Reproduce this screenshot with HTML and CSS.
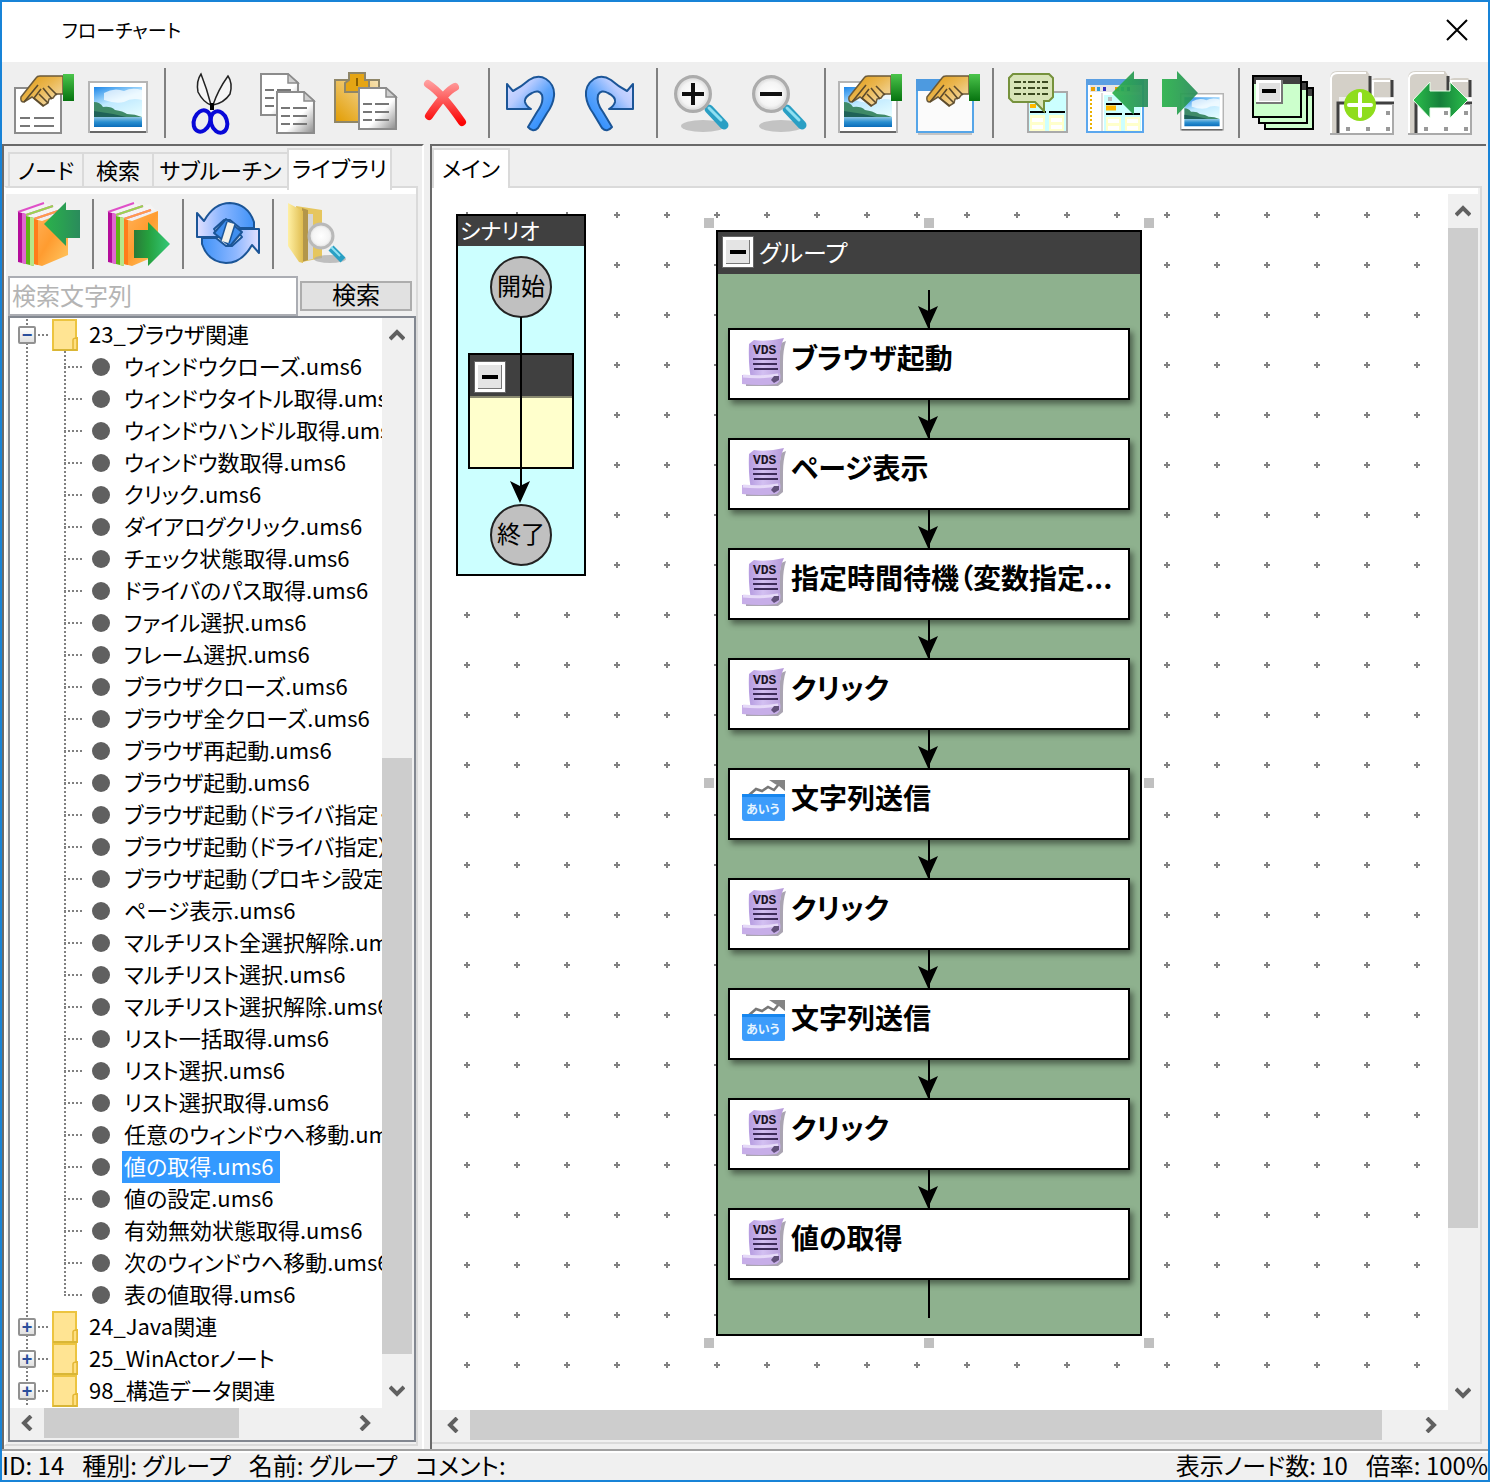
FILE: index.html
```html
<!DOCTYPE html>
<html lang="ja">
<head>
<meta charset="utf-8">
<meta name="viewport" content="width=device-width, initial-scale=1">
<title>フローチャート</title>
<link rel="stylesheet" href="styles.css">
</head>
<body>
<svg class="defs" width="0" height="0" aria-hidden="true">
  <defs>
    <linearGradient id="g-hand" x1="0" y1="0" x2="1" y2="1"><stop offset="0" stop-color="#e09a10"/><stop offset=".45" stop-color="#eab64e"/><stop offset="1" stop-color="#f6e6c4"/></linearGradient>
    <linearGradient id="g-cuff" x1="0" y1="0" x2="0" y2="1"><stop offset="0" stop-color="#4cc54c"/><stop offset="1" stop-color="#06730f"/></linearGradient>
    <linearGradient id="g-sky" x1="0" y1="0" x2=".4" y2="1"><stop offset="0" stop-color="#1c86e8"/><stop offset=".45" stop-color="#bfe9ff"/><stop offset="1" stop-color="#eaffff"/></linearGradient>
    <linearGradient id="g-sea" x1="0" y1="0" x2="0" y2="1"><stop offset="0" stop-color="#8fc6e4"/><stop offset=".5" stop-color="#2a8fd0"/><stop offset="1" stop-color="#0b6dba"/></linearGradient>
    <linearGradient id="g-page" x1="0" y1="0" x2="1" y2="1"><stop offset=".6" stop-color="#fff"/><stop offset="1" stop-color="#8a8a8a"/></linearGradient>
    <linearGradient id="g-clip" x1="1" y1="0" x2="0" y2="1"><stop offset="0" stop-color="#f7e3b4"/><stop offset="1" stop-color="#e29c00"/></linearGradient>
    <linearGradient id="g-red" gradientUnits="userSpaceOnUse" x1="0" y1="10" x2="0" y2="52"><stop offset="0" stop-color="#ffa0a0"/><stop offset="1" stop-color="#fb0505"/></linearGradient>
    <linearGradient id="g-blue" x1="0" y1="0" x2="1" y2="1"><stop offset="0" stop-color="#e2e0ff"/><stop offset=".3" stop-color="#b9ccff"/><stop offset=".55" stop-color="#5fa5fb"/><stop offset="1" stop-color="#1583ff"/></linearGradient>
    <linearGradient id="g-cycle" x1="0" y1="0" x2="1" y2="0"><stop offset="0" stop-color="#e2e0ff"/><stop offset=".4" stop-color="#8fb8ff"/><stop offset="1" stop-color="#3f92f8"/></linearGradient>
    <linearGradient id="g-green" x1="0" y1="0" x2="1" y2="0"><stop offset="0" stop-color="#2bb24c"/><stop offset=".5" stop-color="#2aa052"/><stop offset="1" stop-color="#2a8b5c"/></linearGradient>
    <linearGradient id="g-green2" x1="0" y1="0" x2="1" y2="0"><stop offset="0" stop-color="#2a7a38"/><stop offset=".4" stop-color="#25a03e"/><stop offset="1" stop-color="#34c878"/></linearGradient>
    <linearGradient id="g-orange" x1="0" y1="0" x2="1" y2="1"><stop offset="0" stop-color="#ffb35c"/><stop offset=".5" stop-color="#ff9c30"/><stop offset="1" stop-color="#ffc964"/></linearGradient>
    <linearGradient id="g-fold" x1="0" y1="0" x2="1" y2="0"><stop offset="0" stop-color="#fff0a4"/><stop offset="1" stop-color="#e0bd50"/></linearGradient>
    <radialGradient id="g-lens"><stop offset="0" stop-color="#fff"/><stop offset=".7" stop-color="#f4f4f4"/><stop offset="1" stop-color="#d8d8d8"/></radialGradient>
    <linearGradient id="g-both" x1="0" y1="0" x2="1" y2="0"><stop offset="0" stop-color="#2bc04c"/><stop offset=".5" stop-color="#15803a"/><stop offset="1" stop-color="#2bc04c"/></linearGradient>
    <linearGradient id="g-scroll" x1="0" y1="0" x2="1" y2="0"><stop offset="0" stop-color="#b59be0"/><stop offset=".4" stop-color="#d3c0f2"/><stop offset="1" stop-color="#b69ad9"/></linearGradient>

    <symbol id="hand" viewBox="0 0 64 40">
      <path d="M9 26 24 7Q25 5 28 5H51V23H44L41 27 37 28 36 32 31 35 20 26 12 31Q8 31 9 26Z" fill="url(#g-hand)" stroke="#6b5a3a" stroke-width="1.5"/>
      <path d="M26 14 12 31M29 18 22 27 32 35M31 17l9 11M36 15l9 9M27 23l9 9" fill="none" stroke="#5b4a2c" stroke-width="1.6"/>
      <path d="M51 3H62V30H51Z" fill="url(#g-cuff)"/>
    </symbol>
    <symbol id="photo" viewBox="0 0 60 54" preserveAspectRatio="none">
      <path d="M1 1H59V51H1Z" fill="#fff" stroke="#b5b5b5" stroke-width="2"/>
      <path d="M2 51H58" stroke="#686868" stroke-width="2"/>
      <path d="M6 6H54V46H6Z" fill="url(#g-sky)"/>
      <path d="M16 12q10-6 20-2 8-4 18-1v10q-10-3-18 2-8 2-20-2z" fill="#fff" opacity=".7"/>
      <path d="M6 36H54V46H6Z" fill="url(#g-sea)"/>
      <path d="M6 21q6 0 9 5 8-1 12 3 8 1 12 4 8 0 15 3H6Z" fill="#3f8a68"/>
      <path d="M6 30q16 2 32 6H6Z" fill="#1f6258"/>
    </symbol>
    <symbol id="page" viewBox="0 0 40 44">
      <path d="M1 1H28L38 10V42H1Z" fill="url(#g-page)" stroke="#8c8c8c" stroke-width="2"/>
      <path d="M28 1V10H38Z" fill="#d0d0d0" stroke="#8c8c8c" stroke-width="1.5"/>
      <path d="M5 17h9M17 17h14M5 25h9M17 25h14M5 33h9M17 33h14" stroke="#777" stroke-width="2"/>
    </symbol>
    <symbol id="lens" viewBox="0 0 64 64">
      <ellipse cx="31" cy="55" rx="22" ry="6" fill="#b8b8b8" opacity=".8"/>
      <path d="M37 38 52 54" stroke="#2a9fc4" stroke-width="9" stroke-linecap="round"/>
      <path d="M37 37 49 49" stroke="#8fe0f2" stroke-width="3" stroke-linecap="round"/>
      <circle cx="21" cy="23" r="17" fill="url(#g-lens)" stroke="#acacac" stroke-width="4"/>
      <circle cx="21" cy="23" r="15" fill="none" stroke="#e4e4e4" stroke-width="1.5"/>
    </symbol>
    <symbol id="undo" viewBox="0 0 54 64">
      <path d="M3 13 9 20Q17 16 25 9 34 3 42 8 51 14 50 25 49 34 43 42L34 57Q29 62 24 56L33 41Q40 32 38 24 35 18 28 22 20 26 21 31 22 35 27 38L3 38Z" fill="url(#g-blue)" stroke="#1b5597" stroke-width="2" stroke-linejoin="round"/>
    </symbol>
    <symbol id="books" viewBox="0 0 64 64">
      <path d="M2 10 28 0 36 4 44 2 50 8 20 18Z" fill="#f4f4f4"/>
      <path d="M2 10 28 1M10 13 37 4M18 17 45 8" stroke-width="2" stroke="#df4fc8"/>
      <path d="M10 13 37 4" stroke-width="2" stroke="#9ad650"/>
      <path d="M18 17 45 8" stroke-width="2" stroke="#ff9d4a"/>
      <path d="M2 10 10 12V62L2 60Z" fill="#b30c9a"/><path d="M6 11 10 12V62L6 61Z" fill="#df68cf"/>
      <path d="M10 14 18 16V64L10 62Z" fill="#60b514"/><path d="M14 15 18 16V64L14 63Z" fill="#b7e68a"/>
      <path d="M18 17 26 19 52 9V53L26 64 18 62Z" fill="url(#g-orange)"/>
      <path d="M18 17 22 18V63L18 62Z" fill="#ff7d1a"/>
    </symbol>
    <symbol id="cycle-half" viewBox="0 0 64 64">
      <path d="M1 11 8 19Q18 1 34 1 52 2 58 20V26H44L34 18H28L18 27 24 35H1Z" fill="url(#g-cycle)" stroke="#1b5597" stroke-width="2" stroke-linejoin="round"/>
    </symbol>
    <symbol id="tab-sheet" viewBox="0 0 66 66">
      <path d="M0 64V6Q1 0 7 0H37L41 6V26H9V64Z" fill="#d4d0c8"/>
      <path d="M1 64V7Q2 2 8 2H36" fill="none" stroke="#fff" stroke-width="2"/>
      <path d="M42 9Q43 7 46 7H60L63 10V26H42Z" fill="#d4d0c8"/>
      <path d="M43 26V10H60" fill="none" stroke="#fff" stroke-width="2"/>
      <path d="M40 5V26M62 9V26" stroke="#404040" stroke-width="3"/>
      <path d="M40 29H64" stroke="#fff" stroke-width="4"/>
      <path d="M8 31H64V64H8Z" fill="#fff"/>
      <path d="M8 64V32H64" fill="none" stroke="#404040" stroke-width="3"/>
      <path d="M63 33V63H0" fill="none" stroke="#aaa" stroke-width="2"/>
      <path d="M16 58h4M36 58h4M56 58h4M56 42h4M36 42h4" stroke="#999" stroke-width="4"/>
    </symbol>
    <symbol id="script" viewBox="0 0 44 50">
      <path d="M39 5 44 3Q41 12 41 24V44L36 48H4V45H34Z" fill="#8d8698" opacity=".75"/>
      <path d="M12 2Q25 4 42 0 37 10 38 22V42L34 46H10Q6 30 7 6Z" fill="url(#g-scroll)"/>
      <path d="M0 37Q18 39 38 35 40 43 34 46 18 48 0 46Z" fill="#c7aee8"/>
      <path d="M1 38Q18 40 36 37" fill="none" stroke="#e6daf8" stroke-width="3"/>
      <path d="M29 42l3-4h5v4l-5 3z" fill="#62507a"/>
      <path d="M11 21H35M11 26H35M12 31H36" stroke="#3d2b58" stroke-width="2"/>
      <text x="11" y="16" font-size="13" font-weight="700" font-family="Liberation Mono, monospace" fill="#1c1426">VDS</text>
    </symbol>
    <symbol id="send" viewBox="0 0 44 50">
      <path d="M6 18 14 11 20 13 26 9 32 12 37 6" fill="none" stroke="#777" stroke-width="2.5"/>
      <path d="M27 2H43V13L37 8 33 6Z" fill="#848484"/>
      <path d="M0 17H43V41Q43 43 40 43H3Q0 43 0 40Z" fill="#3c9cfb"/>
      <path d="M0 16H43V19H0Z" fill="#1786ee"/>
      <text x="4" y="36" font-size="12" font-weight="700" font-family="Noto Sans CJK JP, sans-serif" fill="#e6f4ff">あいう</text>
    </symbol>
    <symbol id="folder" viewBox="0 0 26 32">
      <path d="M1 1H24V19H25V31H1Z" fill="#ffe493" stroke="#ecc440" stroke-width="2"/>
      <path d="M21 31V21Q21 19 25 19V31Z" fill="#ffe082" stroke="#e3b735" stroke-width="1.5"/>
      <path d="M1 31H25" stroke="#d9b636" stroke-width="2"/>
    </symbol>
    <symbol id="down" viewBox="0 0 20 22"><path d="M0 0 10 5 20 0 10 22Z" fill="#000"/></symbol>
    <pattern id="plus-grid" width="50" height="50" patternUnits="userSpaceOnUse">
      <path d="M34 24h2v2h2v2h-2v2h-2v-2h-2v-2h2z" fill="#808080"/>
    </pattern>
  </defs>
</svg>

<div class="window">
  <header class="titlebar">
    <h1 class="title">フローチャート</h1>
    <button class="close" type="button" aria-label="閉じる"><svg width="22" height="22" viewBox="0 0 22 22"><path d="M1 1 21 21M21 1 1 21" stroke="#000" stroke-width="2"/></svg></button>
  </header>

  <nav class="toolbar" aria-label="ツールバー">
    <button class="tool" type="button" aria-label="プロパティ"><svg viewBox="0 0 64 64"><path d="M3 17H49V62H3Z" fill="#fff" stroke="#8c8c8c" stroke-width="2"/><path d="M8 47h10M22 47h20M8 55h10M22 55h20" stroke="#777" stroke-width="2"/><use href="#hand" width="64" height="40"/></svg></button>
    <button class="tool" type="button" aria-label="画像"><svg viewBox="0 0 64 64"><use href="#photo" x="-2" y="10" width="60" height="54"/></svg></button>
    <span class="sep"></span>
    <button class="tool" type="button" aria-label="切り取り"><svg viewBox="0 0 64 64"><path d="M21 3Q16 10 18 21 23 31 31 34 27 18 21 3Z" fill="#f6f6f6" stroke="#222" stroke-width="1.5"/><path d="M48 5Q53 12 50 23 44 32 33 34 38 19 48 5Z" fill="#f6f6f6" stroke="#222" stroke-width="1.5"/><path d="M30 32h4v7h-4z"/><ellipse cx="22" cy="50" rx="8" ry="11" transform="rotate(22 22 50)" fill="none" stroke="#0808d8" stroke-width="4"/><ellipse cx="39" cy="51" rx="8" ry="11" transform="rotate(-18 39 51)" fill="none" stroke="#0808d8" stroke-width="4"/></svg></button>
    <button class="tool" type="button" aria-label="コピー"><svg viewBox="0 0 64 64"><use href="#page" x="2" y="2" width="40" height="44"/><use href="#page" x="18" y="20" width="40" height="44"/></svg></button>
    <button class="tool" type="button" aria-label="貼り付け"><svg viewBox="0 0 64 64"><path d="M-1 9H43V51H-1Z" fill="url(#g-clip)" stroke="#8f8668" stroke-width="2"/><path d="M13 2H29V9H33V21H9V12L13 9Z" fill="#e5a514" stroke="#8f8668" stroke-width="2"/><path d="M21 7v8" stroke="#8a5f00" stroke-width="2"/><use href="#page" x="22" y="16" width="40" height="44"/></svg></button>
    <button class="tool" type="button" aria-label="削除"><svg viewBox="0 0 64 64"><path d="M14 13Q28 22 48 51M41 16Q32 20 15 45" fill="none" stroke="url(#g-red)" stroke-width="8" stroke-linecap="round"/></svg></button>
    <span class="sep"></span>
    <button class="tool" type="button" aria-label="元に戻す"><svg viewBox="0 0 64 64"><use href="#undo" width="54" height="64"/></svg></button>
    <button class="tool" type="button" aria-label="やり直し"><svg viewBox="0 0 64 64"><use href="#undo" width="54" height="64" transform="matrix(-1 0 0 1 54 0)"/></svg></button>
    <span class="sep"></span>
    <button class="tool" type="button" aria-label="拡大"><svg viewBox="0 0 64 64"><use href="#lens" width="64" height="64"/><path d="M10 23H32M21 12V34" stroke="#111" stroke-width="4"/></svg></button>
    <button class="tool" type="button" aria-label="縮小"><svg viewBox="0 0 64 64"><use href="#lens" width="64" height="64"/><path d="M10 23H32" stroke="#111" stroke-width="4"/></svg></button>
    <span class="sep"></span>
    <button class="tool" type="button" aria-label="画像の選択"><svg viewBox="0 0 64 64"><use href="#photo" x="-2" y="10" width="60" height="54"/><use href="#hand" width="64" height="40"/></svg></button>
    <button class="tool" type="button" aria-label="ウィンドウの選択"><svg viewBox="0 0 64 64"><path d="M-1 9H55V61H-1Z" fill="#fbfbfb" stroke="#55a5e8" stroke-width="2"/><path d="M-2 8H56V20H-2Z" fill="#4d9ae0"/><path d="M0 63H54" stroke="#999" stroke-width="1"/><use href="#hand" width="64" height="40"/></svg></button>
    <span class="sep"></span>
    <button class="tool" type="button" aria-label="コメント"><svg viewBox="0 0 64 64"><path d="M20 21H59V61H20Z" fill="#cff" stroke="#aaa" stroke-width="2"/><path d="M22 33h6v4h-6z" fill="#ffb800"/><path d="M22 41H38M41 41H57" stroke="#000" stroke-width="2"/><path d="M22 44H37V60H22ZM41 44H56V60H41Z" fill="#ffc"/><path d="M24 49h11M43 49h11M24 56h11M43 56h11" stroke="#fff" stroke-width="4"/><path d="M5 3H41L45 7V26L41 30H36V40L27 31H5L1 27V7Z" fill="#d8e4b8" stroke="#76923c" stroke-width="2"/><path d="M6 11h34M6 17h34M6 23h34" stroke="#3c4a20" stroke-width="2" stroke-dasharray="7 2 3 2"/></svg></button>
    <button class="tool" type="button" aria-label="シナリオを読み込む"><svg viewBox="0 0 64 64"><path d="M1 9H57V61H1Z" fill="#fff" stroke="#5ba7ee" stroke-width="2"/><path d="M0 8H58V14H0Z" fill="#5b9fe2"/><path d="M4 14H54V21H4Z" fill="#e4e4e4"/><path d="M5 18h4M29 18h4" stroke="#e9a000" stroke-width="4"/><path d="M11 18h3M35 18h3" stroke="#2b9bd8" stroke-width="4"/><path d="M17 18h3M41 18h3" stroke="#3430c0" stroke-width="4"/><path d="M5 24v36" stroke="#e9b000" stroke-width="2" stroke-dasharray="2 2"/><path d="M16 22v38" stroke="#ddd" stroke-width="2"/><path d="M18 24H55V60H18Z" fill="#cff"/><path d="M22 28h4" stroke="#bbb" stroke-width="4"/><path d="M20 37h10" stroke="#ffb800" stroke-width="5"/><path d="M20 33H36M20 43H36M39 43H54" stroke="#000" stroke-width="2"/><path d="M20 46H35V60H20ZM39 46H54V60H39Z" fill="#ffc"/><path d="M22 50h11M41 50h11M22 57h11M41 57h11" stroke="#fff" stroke-width="4"/><path d="M26 22 48 0V8H62V36H48V44Z" fill="url(#g-green)" opacity=".93"/></svg></button>
    <button class="tool" type="button" aria-label="画像へ出力"><svg viewBox="0 0 64 64"><use href="#photo" x="16" y="22" width="44" height="39"/><path d="M-2 8H13V0L34 22 13 44V36H-2Z" fill="url(#g-green)" opacity=".93"/></svg></button>
    <span class="sep"></span>
    <button class="tool" type="button" aria-label="グループ一覧"><svg viewBox="0 0 64 64"><g fill="#cfc" stroke="#000" stroke-width="2"><path d="M11 17H59V58H11Z"/><path d="M50 18H58V25H50Z" fill="#404040" stroke="none"/><path d="M5 11H53V52H5Z"/><path d="M48 12H52V19H48Z" fill="#404040" stroke="none"/><path d="M-1 5H47V46H-1Z"/></g><path d="M0 6H46V13H0Z" fill="#404040"/><path d="M2 9H29V33H2Z" fill="#777"/><path d="M2 9H27V31H2Z" fill="#fff"/><path d="M5 12H26V30H5Z" fill="#e0e0e0"/><path d="M8 20H22" stroke="#000" stroke-width="4"/></svg></button>
    <button class="tool" type="button" aria-label="タブを追加"><svg viewBox="0 0 64 64"><use href="#tab-sheet" x="-2" y="0" width="66" height="66"/><circle cx="28" cy="34" r="16" fill="#8fdd1c"/><path d="M17 34H39M28 23V45" stroke="#fff" stroke-width="4" stroke-linecap="round"/></svg></button>
    <button class="tool" type="button" aria-label="タブ幅"><svg viewBox="0 0 64 64"><use href="#tab-sheet" x="-2" y="0" width="66" height="66"/><path d="M3 29 20 11V20H40V11L58 29 40 47V37H20V47Z" fill="url(#g-both)" stroke="#e8ffe8" stroke-width="1"/></svg></button>
  </nav>

  <main class="workspace">
    <aside class="side">
      <div class="tabs" role="tablist">
        <button class="tab tab-node" role="tab" type="button">ノード</button>
        <button class="tab tab-find" role="tab" type="button">検索</button>
        <button class="tab tab-sub" role="tab" type="button">サブルーチン</button>
        <button class="tab tab-lib active" role="tab" type="button" aria-selected="true">ライブラリ</button>
      </div>
      <div class="side-body">
        <div class="side-tools">
          <button class="tool" type="button" aria-label="インポート"><svg viewBox="0 0 64 64"><use href="#books" width="64" height="64"/><path d="M28 22 50 0V8H64V36H50V44Z" fill="url(#g-green)"/></svg></button>
          <span class="sep"></span>
          <button class="tool" type="button" aria-label="エクスポート"><svg viewBox="0 0 64 64"><use href="#books" width="64" height="64"/><path d="M28 28H42V20L64 42 42 64V56H28Z" fill="url(#g-green2)"/></svg></button>
          <span class="sep"></span>
          <button class="tool" type="button" aria-label="更新"><svg viewBox="0 0 64 64"><use href="#cycle-half" width="64" height="64"/><use href="#cycle-half" width="64" height="64" transform="rotate(180 32 31)"/><path d="M30 17 46 30 34 44 18 31Z" fill="#3f8eee" stroke="#1b5597" stroke-width="2" stroke-linejoin="round"/><path d="M35 21 29 40" stroke="#1b5597" stroke-width="10"/><path d="M35 21 29 40" stroke="#f2f2ea" stroke-width="7"/></svg></button>
          <span class="sep"></span>
          <button class="tool" type="button" aria-label="フォルダ検索"><svg viewBox="0 0 64 64"><path d="M10 4 36 8V56L16 60Z" fill="#e6c65e"/><path d="M16 6 22 8V58L16 60Z" fill="#b3964a"/><path d="M22 12 27 12V57L22 58Z" fill="#d6d6d6"/><path d="M2 1 17 9V61L13 60 2 44Z" fill="url(#g-fold)"/><ellipse cx="44" cy="57" rx="16" ry="4" fill="#a8a8a8" opacity=".7"/><path d="M45 46 57 58" stroke="#2aa0c4" stroke-width="7"/><path d="M45 45 54 54" stroke="#8fe0f2" stroke-width="2"/><circle cx="35" cy="34" r="12" fill="url(#g-lens)" stroke="#b9b9b9" stroke-width="3"/></svg></button>
        </div>
        <form class="search">
          <input class="search-box" type="text" placeholder="検索文字列" aria-label="検索文字列">
          <button class="search-go" type="button">検索</button>
        </form>
        <div class="tree-frame">
          <ul class="tree">
            <li class="folder"><button class="toggle" type="button" aria-label="閉じる">−</button><svg class="folder-icon" viewBox="0 0 26 32"><use href="#folder"/></svg><span>23_ブラウザ関連</span></li>
            <li class="leaf"><span>ウィンドウクローズ.ums6</span></li>
            <li class="leaf"><span>ウィンドウタイトル取得.ums6</span></li>
            <li class="leaf"><span>ウィンドウハンドル取得.ums6</span></li>
            <li class="leaf"><span>ウィンドウ数取得.ums6</span></li>
            <li class="leaf"><span>クリック.ums6</span></li>
            <li class="leaf"><span>ダイアログクリック.ums6</span></li>
            <li class="leaf"><span>チェック状態取得.ums6</span></li>
            <li class="leaf"><span>ドライバのパス取得.ums6</span></li>
            <li class="leaf"><span>ファイル選択.ums6</span></li>
            <li class="leaf"><span>フレーム選択.ums6</span></li>
            <li class="leaf"><span>ブラウザクローズ.ums6</span></li>
            <li class="leaf"><span>ブラウザ全クローズ.ums6</span></li>
            <li class="leaf"><span>ブラウザ再起動.ums6</span></li>
            <li class="leaf"><span>ブラウザ起動.ums6</span></li>
            <li class="leaf"><span>ブラウザ起動（ドライバ指定・</span></li>
            <li class="leaf"><span>ブラウザ起動（ドライバ指定）</span></li>
            <li class="leaf"><span>ブラウザ起動（プロキシ設定）</span></li>
            <li class="leaf"><span>ページ表示.ums6</span></li>
            <li class="leaf"><span>マルチリスト全選択解除.ums6</span></li>
            <li class="leaf"><span>マルチリスト選択.ums6</span></li>
            <li class="leaf"><span>マルチリスト選択解除.ums6</span></li>
            <li class="leaf"><span>リスト一括取得.ums6</span></li>
            <li class="leaf"><span>リスト選択.ums6</span></li>
            <li class="leaf"><span>リスト選択取得.ums6</span></li>
            <li class="leaf"><span>任意のウィンドウへ移動.ums6</span></li>
            <li class="leaf selected"><span>値の取得.ums6</span></li>
            <li class="leaf"><span>値の設定.ums6</span></li>
            <li class="leaf"><span>有効無効状態取得.ums6</span></li>
            <li class="leaf"><span>次のウィンドウへ移動.ums6</span></li>
            <li class="leaf last"><span>表の値取得.ums6</span></li>
            <li class="folder"><button class="toggle" type="button" aria-label="開く">+</button><svg class="folder-icon" viewBox="0 0 26 32"><use href="#folder"/></svg><span>24_Java関連</span></li>
            <li class="folder"><button class="toggle" type="button" aria-label="開く">+</button><svg class="folder-icon" viewBox="0 0 26 32"><use href="#folder"/></svg><span>25_WinActorノート</span></li>
            <li class="folder"><button class="toggle" type="button" aria-label="開く">+</button><svg class="folder-icon" viewBox="0 0 26 32"><use href="#folder"/></svg><span>98_構造データ関連</span></li>
          </ul>
          <div class="vbar">
            <button class="arrow" type="button" aria-label="上へ"><svg viewBox="0 0 16 12"><path d="M1 10 8 3 15 10"/></svg></button>
            <div class="track"><div class="spacer up-tree"></div><div class="thumb th-tree"></div><div class="spacer dn-tree"></div></div>
            <button class="arrow" type="button" aria-label="下へ"><svg viewBox="0 0 16 12"><path d="M1 2 8 9 15 2"/></svg></button>
          </div>
          <div class="hbar">
            <button class="arrow" type="button" aria-label="左へ"><svg viewBox="0 0 12 16"><path d="M10 1 3 8 10 15"/></svg></button>
            <div class="track"><div class="thumb hth-tree"></div><div class="spacer rt-tree"></div></div>
            <button class="arrow" type="button" aria-label="右へ"><svg viewBox="0 0 12 16"><path d="M2 1 9 8 2 15"/></svg></button>
          </div>
        </div>
      </div>
    </aside>

    <section class="editor">
      <div class="tabs" role="tablist">
        <button class="tab tab-main active" role="tab" type="button" aria-selected="true">メイン</button>
      </div>
      <div class="editor-body">
        <div class="canvas">
          <svg class="grid-layer" width="100%" height="100%" aria-hidden="true"><rect width="100%" height="100%" fill="url(#plus-grid)"/></svg>

          <div class="scenario">
            <div class="scenario-head">シナリオ</div>
            <div class="scenario-flow">
              <div class="terminal">開始</div>
              <div class="mini-group"><div class="mini-head"><button class="collapse" type="button" aria-label="折りたたむ"></button></div></div>
              <div class="terminal">終了</div>
              <svg class="scenario-line" width="20" height="188" viewBox="0 0 20 188" aria-hidden="true"><path d="M11 0V170" stroke="#000" stroke-width="2"/><use href="#down" y="164" width="20" height="22"/></svg>
            </div>
          </div>

          <div class="group">
            <div class="group-head"><button class="collapse" type="button" aria-label="折りたたむ"></button>グループ</div>
            <div class="group-flow">
              <span class="link"></span>
              <div class="node"><svg viewBox="0 0 44 50"><use href="#script"/></svg>ブラウザ起動</div>
              <span class="link"></span>
              <div class="node"><svg viewBox="0 0 44 50"><use href="#script"/></svg>ページ表示</div>
              <span class="link"></span>
              <div class="node"><svg viewBox="0 0 44 50"><use href="#script"/></svg>指定時間待機（変数指定...</div>
              <span class="link"></span>
              <div class="node"><svg viewBox="0 0 44 50"><use href="#script"/></svg>クリック</div>
              <span class="link"></span>
              <div class="node"><svg viewBox="0 0 44 50"><use href="#send"/></svg>文字列送信</div>
              <span class="link"></span>
              <div class="node"><svg viewBox="0 0 44 50"><use href="#script"/></svg>クリック</div>
              <span class="link"></span>
              <div class="node"><svg viewBox="0 0 44 50"><use href="#send"/></svg>文字列送信</div>
              <span class="link"></span>
              <div class="node"><svg viewBox="0 0 44 50"><use href="#script"/></svg>クリック</div>
              <span class="link"></span>
              <div class="node"><svg viewBox="0 0 44 50"><use href="#script"/></svg>値の取得</div>
              <span class="link tail"></span>
            </div>
            <i class="grip nw"></i><i class="grip n"></i><i class="grip ne"></i><i class="grip w"></i><i class="grip e"></i><i class="grip sw"></i><i class="grip s"></i><i class="grip se"></i>
          </div>
        </div>
        <div class="vbar">
          <button class="arrow" type="button" aria-label="上へ"><svg viewBox="0 0 16 12"><path d="M1 10 8 3 15 10"/></svg></button>
          <div class="track"><div class="thumb th-main"></div><div class="spacer dn-main"></div></div>
          <button class="arrow" type="button" aria-label="下へ"><svg viewBox="0 0 16 12"><path d="M1 2 8 9 15 2"/></svg></button>
        </div>
        <div class="hbar">
          <button class="arrow" type="button" aria-label="左へ"><svg viewBox="0 0 12 16"><path d="M10 1 3 8 10 15"/></svg></button>
          <div class="track"><div class="thumb hth-main"></div><div class="spacer rt-main"></div></div>
          <button class="arrow" type="button" aria-label="右へ"><svg viewBox="0 0 12 16"><path d="M2 1 9 8 2 15"/></svg></button>
        </div>
      </div>
    </section>
  </main>

  <footer class="status">
    <span>ID: 14</span><span>種別: グループ</span><span>名前: グループ</span><span>コメント:</span>
    <span class="count">表示ノード数: 10</span><span class="zoom">倍率: 100%</span>
  </footer>
</div>
</body>
</html>
```
FILE: styles.css
```css
* { box-sizing: border-box; }

body {
  margin: 0;
  background: #efefef;
  color: #000;
  font: 22px/32px "Noto Sans CJK JP", sans-serif;
  font-feature-settings: "palt";
}

button, input {
  margin: 0;
  padding: 0;
  border: 0;
  background: none;
  color: inherit;
  font: inherit;
  font-feature-settings: inherit;
}

.defs { position: absolute; }

.window {
  display: flex;
  flex-direction: column;
  min-height: 100vh;
  border: 2px solid #1883d7;
}

/* Title bar */
.titlebar {
  display: flex;
  align-items: center;
  justify-content: space-between;
  height: 60px;
  padding: 0 20px 4px 60px;
  background: #fff;
}
.title { margin: 0; font-size: 19px; font-weight: 400; }
.close { display: flex; }

/* Main toolbar */
.toolbar {
  display: flex;
  align-items: center;
  gap: 14px;
  height: 82px;
  padding-left: 10px;
}
.tool { flex: none; display: flex; width: 64px; height: 64px; }
.tool svg { width: 64px; height: 64px; overflow: visible; }
.sep { flex: none; width: 2px; height: 70px; margin-left: -4px; background: #808080; }

/* Panels */
.workspace { flex: 1; display: flex; gap: 6px; }
.side {
  flex: none;
  display: flex;
  flex-direction: column;
  width: 422px;
  padding: 2px 4px 0 0;
  border-top: 2px solid #696969;
  border-left: 2px solid #696969;
  border-right: 2px solid #fff;
}
.editor {
  flex: 1;
  min-width: 0;
  display: flex;
  flex-direction: column;
  margin-right: 2px;
  padding: 2px 4px 0 0;
  border-top: 2px solid #696969;
  border-left: 2px solid #696969;
}

.tabs { display: flex; align-items: flex-end; height: 38px; }
.side .tabs { padding-left: 4px; }
.tab {
  height: 34px;
  padding-bottom: 2px;
  border: 2px solid #dadada;
  border-bottom: 0;
  border-right: 0;
  background: #f0f0f0;
  line-height: 30px;
}
.tab.active {
  position: relative;
  height: 42px;
  margin-bottom: -4px;
  padding-bottom: 6px;
  border-right: 2px solid #dadada;
  background: #fff;
}
.tab-node { width: 74px; }
.tab-find { width: 70px; }
.tab-sub { width: 135px; }
.tab-lib { width: 105px; }
.tab-main { width: 78px; }

.side-body {
  flex: 1;
  display: flex;
  flex-direction: column;
  margin-bottom: 3px;
  padding: 6px 0 2px 2px;
  border: 2px solid #dadada;
  border-left-color: #fff;
  background: linear-gradient(#fff 6px, #f0f0f0 6px);
}
.side-tools {
  display: flex;
  align-items: center;
  gap: 12px;
  height: 82px;
  padding: 0 0 2px 8px;
}
.side-tools .sep { margin: 0; }

.search { display: flex; gap: 2px; align-items: center; height: 40px; font-size: 24px; }
.search-box {
  width: 290px;
  height: 40px;
  padding: 0 2px 4px;
  border: 2px solid #abadb3;
  background: #fff;
}
.search-box::placeholder { color: #b4b4b4; opacity: 1; }
.search-go {
  width: 112px;
  height: 30px;
  padding-bottom: 4px;
  border: 2px solid #adadad;
  background: #e1e1e1;
  line-height: 22px;
}

/* Library tree */
.tree-frame {
  flex: 1;
  display: grid;
  grid-template-columns: minmax(0, 1fr) 30px;
  grid-template-rows: 1fr 30px;
  padding: 0 2px 2px 0;
  border: 2px solid #828790;
  background: #f0f0f0;
}
.tree {
  margin: 0;
  padding: 1px 0 0;
  overflow: hidden;
  background: #fff;
  list-style: none;
}
.tree li {
  display: flex;
  align-items: center;
  height: 32px;
  white-space: nowrap;
  background:
    repeating-linear-gradient(#808080 0 2px, transparent 2px 4px) 16px 0 / 2px 100% no-repeat,
    repeating-linear-gradient(90deg, #808080 0 2px, transparent 2px 4px) 28px 15px / 10px 2px no-repeat;
}
.tree span { height: 32px; line-height: 28px; }
.folder { gap: 12px; padding-left: 8px; }
.folder-icon { flex: none; width: 26px; height: 32px; margin-left: 4px; }
.folder span { margin-left: -1px; }
.toggle {
  flex: none;
  width: 18px;
  height: 18px;
  border: 2px solid #919191;
  border-radius: 2px;
  background: linear-gradient(#fff, #e0e0e0);
  color: #2b4f9c;
  font: 700 18px/13px "Liberation Sans", sans-serif;
}
.tree .leaf {
  gap: 12px;
  padding-left: 82px;
  background:
    repeating-linear-gradient(#808080 0 2px, transparent 2px 4px) 16px 0 / 2px 100% no-repeat,
    repeating-linear-gradient(#808080 0 2px, transparent 2px 4px) 54px 0 / 2px 100% no-repeat,
    repeating-linear-gradient(90deg, #808080 0 2px, transparent 2px 4px) 54px 15px / 20px 2px no-repeat;
}
.tree .last { background-size: 2px 100%, 2px 16px, 20px 2px; }
.leaf::before {
  content: "";
  flex: none;
  width: 18px;
  height: 18px;
  border-radius: 50%;
  background: #606060;
}
.leaf span { padding: 0 6px 0 2px; }
.selected span { background: #39f; color: #fff; }

/* Scroll bars */
.vbar { display: flex; flex-direction: column; background: #f0f0f0; }
.hbar { display: flex; background: #f0f0f0; }
.arrow { flex: none; display: flex; align-items: center; justify-content: center; width: 34px; height: 34px; }
.vbar .arrow { width: 30px; }
.hbar .arrow { height: 30px; }
.arrow svg { width: 16px; height: 16px; fill: none; stroke: #606060; stroke-width: 4; }
.track { flex: 1; display: flex; }
.vbar .track { flex-direction: column; }
.thumb { background: #cdcdcd; }
.up-tree { flex: 406; }
.th-tree { flex: 596; }
.dn-tree { flex: 20; }
.hth-tree { flex: 194; }
.rt-tree { flex: 108; }
.th-main { flex: 1000; }
.dn-main { flex: 148; }
.hth-main { flex: 910; }
.rt-main { flex: 32; }

/* Flowchart canvas */
.editor-body {
  flex: 1;
  display: grid;
  grid-template-columns: minmax(0, 1fr) 30px;
  grid-template-rows: 1fr 30px;
  margin-bottom: 5px;
  padding: 0 2px 2px 0;
  border: 2px solid #dadada;
  border-left: 0;
  background: #f0f0f0;
}
.editor-body .vbar { margin-top: 6px; box-shadow: 0 -6px #fff; }
.editor-body .hbar { padding-left: 4px; }
.canvas {
  position: relative;
  min-height: 1220px;
  overflow: hidden;
  background: #fff;
}
.grid-layer { position: absolute; left: 0; top: 0; }

.scenario {
  position: absolute;
  left: 24px;
  top: 26px;
  width: 130px;
  height: 362px;
  border: 2px solid #000;
  background: #cff;
}
.scenario-head { height: 30px; padding-left: 2px; background: #404040; color: #fff; line-height: 26px; }
.scenario-flow {
  position: relative;
  display: flex;
  flex-direction: column;
  align-items: center;
  justify-content: space-between;
  height: 328px;
  padding: 10px 0 8px;
}
.terminal {
  width: 62px;
  height: 62px;
  border: 2px solid #222;
  border-radius: 50%;
  background: #c0c0c0;
  font-size: 24px;
  line-height: 54px;
  text-align: center;
}
.mini-group { width: 106px; height: 116px; border: 2px solid #000; background: #ffc; }
.mini-head { height: 43px; padding: 6px 4px; border-bottom: 2px solid #8a8a70; background: #404040; }
.scenario-line { position: absolute; left: 52px; top: 71px; }

.collapse {
  display: block;
  flex: none;
  width: 32px;
  height: 32px;
  border: 2px solid #fff;
  outline: 1px solid #666;
  outline-offset: -1px;
  background: linear-gradient(#000, #000) center / 16px 4px no-repeat, #e4e4e4;
  box-shadow: inset 0 0 0 2px #fff, inset -3px -3px #777;
}

.group {
  position: absolute;
  left: 284px;
  top: 42px;
  width: 426px;
  border: 2px solid #000;
  background: #8eb18e;
}
.group-head {
  display: flex;
  align-items: center;
  gap: 5px;
  height: 42px;
  padding: 0 4px 2px;
  background: #404040;
  color: #fff;
  font-size: 24px;
  line-height: 28px;
}
.group-flow { display: flex; flex-direction: column; padding: 16px 10px; }
.node {
  display: flex;
  gap: 5px;
  height: 72px;
  padding: 8px 12px;
  border: 2px solid #000;
  background: #fff;
  box-shadow: 3px 4px 6px rgba(0, 0, 0, .45);
  font-size: 28px;
  font-weight: 700;
  line-height: 38px;
  white-space: nowrap;
}
.node svg { flex: none; width: 44px; height: 50px; }
.link {
  position: relative;
  height: 38px;
  background: linear-gradient(#000, #000) 200px 0 / 2px 100% no-repeat;
}
.link::after {
  content: "";
  position: absolute;
  left: 190px;
  bottom: 0;
  width: 20px;
  height: 22px;
  background: #000;
  clip-path: polygon(0 0, 50% 22%, 100% 0, 50% 100%);
}
.tail::after { display: none; }

.grip { position: absolute; width: 10px; height: 10px; background: #c0c0c0; }
.nw, .n, .ne { top: -14px; }
.w, .e { top: 546px; }
.sw, .s, .se { bottom: -14px; }
.nw, .w, .sw { left: -14px; }
.n, .s { left: 206px; }
.ne, .e, .se { right: -14px; }

/* Status bar */
.status {
  display: flex;
  gap: 18px;
  height: 31px;
  border-top: 2px solid #a0a0a0;
  box-shadow: inset 0 2px #fff;
  background: #f0f0f0;
  font-size: 24px;
  line-height: 28px;
  white-space: nowrap;
}
.count { margin-left: auto; }
```
